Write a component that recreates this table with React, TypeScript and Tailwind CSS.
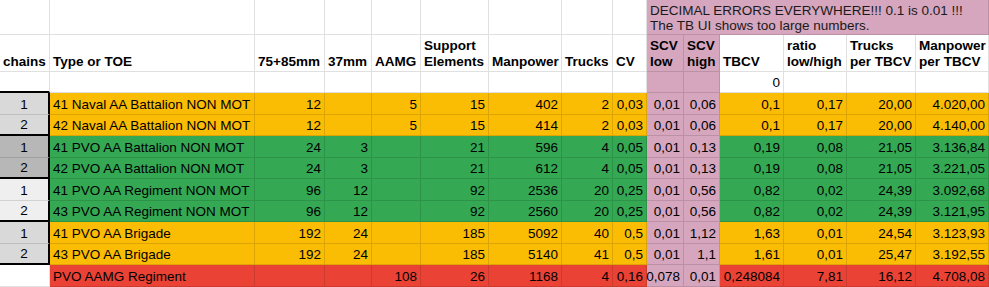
const W = [
  'w-[50px]',
  'w-[205px]',
  'w-[70px]',
  'w-[47px]',
  'w-[49px]',
  'w-[68px]',
  'w-[73px]',
  'w-[51px]',
  'w-[34px]',
  'w-[37px]',
  'w-[36px]',
  'w-[64px]',
  'w-[63px]',
  'w-[69px]',
  'w-[73px]',
];

const HEADERS = [
  'chains',
  'Type or TOE',
  '75+85mm',
  '37mm',
  'AAMG',
  'Support\nElements',
  'Manpower',
  'Trucks',
  'CV',
  'SCV\nlow',
  'SCV\nhigh',
  'TBCV',
  'ratio\nlow/high',
  'Trucks\nper TBCV',
  'Manpower\nper TBCV',
];

const FILL = {
  orange: 'bg-[#fbbc04]',
  green: 'bg-[#34a853]',
  red: 'bg-[#ea4335]',
};

type Row = {
  chain: string;
  chainBg: string;
  fill: keyof typeof FILL;
  groupEnd: boolean;
  type: string;
  values: string[];
};

const ROWS: Row[] = [
  { chain: '1', chainBg: 'bg-[#d9d9d9]', fill: 'orange', groupEnd: false, type: '41 Naval AA Battalion NON MOT', values: ['12', '', '5', '15', '402', '2', '0,03', '0,01', '0,06', '0,1', '0,17', '20,00', '4.020,00'] },
  { chain: '2', chainBg: 'bg-[#d9d9d9]', fill: 'orange', groupEnd: true, type: '42 Naval AA Battalion NON MOT', values: ['12', '', '5', '15', '414', '2', '0,03', '0,01', '0,06', '0,1', '0,17', '20,00', '4.140,00'] },
  { chain: '1', chainBg: 'bg-[#b7b7b7]', fill: 'green', groupEnd: false, type: '41 PVO AA Battalion NON MOT', values: ['24', '3', '', '21', '596', '4', '0,05', '0,01', '0,13', '0,19', '0,08', '21,05', '3.136,84'] },
  { chain: '2', chainBg: 'bg-[#b7b7b7]', fill: 'green', groupEnd: true, type: '42 PVO AA Battalion NON MOT', values: ['24', '3', '', '21', '612', '4', '0,05', '0,01', '0,13', '0,19', '0,08', '21,05', '3.221,05'] },
  { chain: '1', chainBg: 'bg-[#efefef]', fill: 'green', groupEnd: false, type: '41 PVO AA Regiment NON MOT', values: ['96', '12', '', '92', '2536', '20', '0,25', '0,01', '0,56', '0,82', '0,02', '24,39', '3.092,68'] },
  { chain: '2', chainBg: 'bg-[#efefef]', fill: 'green', groupEnd: true, type: '43 PVO AA Regiment NON MOT', values: ['96', '12', '', '92', '2560', '20', '0,25', '0,01', '0,56', '0,82', '0,02', '24,39', '3.121,95'] },
  { chain: '1', chainBg: 'bg-[#d9d9d9]', fill: 'orange', groupEnd: false, type: '41 PVO AA Brigade', values: ['192', '24', '', '185', '5092', '40', '0,5', '0,01', '1,12', '1,63', '0,01', '24,54', '3.123,93'] },
  { chain: '2', chainBg: 'bg-[#d9d9d9]', fill: 'orange', groupEnd: true, type: '43 PVO AA Brigade', values: ['192', '24', '', '185', '5140', '41', '0,5', '0,01', '1,1', '1,61', '0,01', '25,47', '3.192,55'] },
  { chain: '', chainBg: 'bg-white', fill: 'red', groupEnd: false, type: 'PVO AAMG Regiment', values: ['', '', '108', '26', '1168', '4', '0,16', '0,078', '0,01', '0,248084', '7,81', '16,12', '4.708,08'] },
];

// base cell: sheet gridlines drawn as translucent borders so they darken any fill
const cell = 'box-border flex shrink-0 border-r border-b border-black/[0.12] pb-[1px] whitespace-nowrap';
const purple = 'bg-[#d5a6bd]';

export default function App() {
  return (
    <div className="h-[287px] w-[989px] overflow-hidden bg-white font-['Liberation_Sans',Arial,sans-serif] text-[13.5px] text-black">
      {/* note row */}
      <div className="flex h-[35px]">
        {W.slice(0, 9).map((w, i) => (
          <div key={i} className={`${cell} ${w} h-full`} />
        ))}
        <div className={`${cell} ${purple} h-full w-[342px] flex-col items-start justify-end px-[3px] leading-[15px] text-[#1a1a1a]`}>
          <span>DECIMAL ERRORS EVERYWHERE!!! 0.1 is 0.01 !!!</span>
          <span>The TB UI shows too large numbers.</span>
        </div>
      </div>

      {/* column titles */}
      <div className="flex h-[37px] font-bold leading-[16px]">
        {HEADERS.map((h, i) => (
          <div
            key={i}
            className={`${cell} ${W[i]} h-full flex-col items-start justify-end px-[3px] ${i === 9 || i === 10 ? purple : ''}`}
          >
            {h.split('\n').map((line) => (
              <span key={line}>{line}</span>
            ))}
          </div>
        ))}
      </div>

      {/* spacer row */}
      <div className="flex h-[21px] leading-[16px]">
        {W.map((w, i) => (
          <div
            key={i}
            className={`${cell} ${w} h-full items-end justify-end px-[3px] ${i === 9 || i === 10 ? purple : ''} ${i === 0 ? 'border-b-2 border-b-black' : ''}`}
          >
            {i === 11 ? '0' : ''}
          </div>
        ))}
      </div>

      {ROWS.map((r, ri) => (
        <div key={ri} className="flex h-[21.5px] leading-[16px]">
          <div
            className={`${cell} ${W[0]} ${r.chainBg} h-full items-end justify-center ${r.chain ? 'border-r-2 border-r-black' : ''} ${r.groupEnd ? 'border-b-2 border-b-black' : ''}`}
          >
            {r.chain}
          </div>
          <div className={`${cell} ${W[1]} ${FILL[r.fill]} h-full items-end px-[3px]`}>{r.type}</div>
          {r.values.map((v, vi) => (
            <div
              key={vi}
              className={`${cell} ${W[vi + 2]} h-full items-end justify-end pr-[3px] ${vi === 7 || vi === 8 ? purple : FILL[r.fill]}`}
            >
              {v}
            </div>
          ))}
        </div>
      ))}
    </div>
  );
}
